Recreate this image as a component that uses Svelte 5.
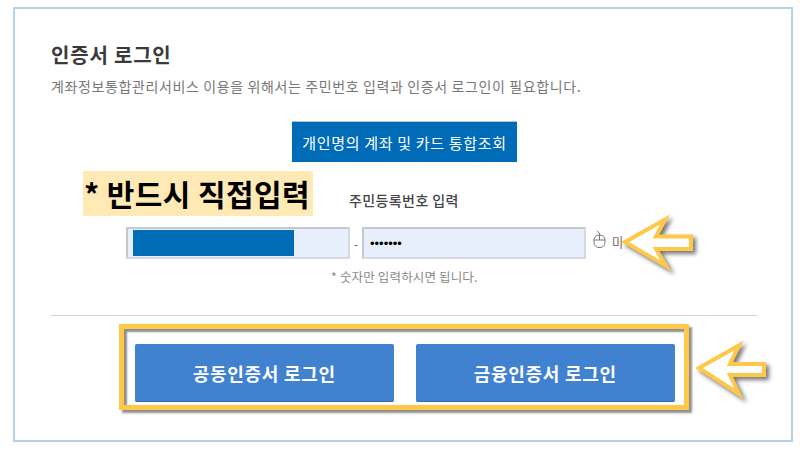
<script>
    let frontNumber = '';
    let backNumber = '1234567';
</script>

<div class="page">
    <section class="cert-panel">
        <h2>인증서 로그인</h2>
        <p class="desc">계좌정보통합관리서비스 이용을 위해서는 주민번호 입력과 인증서 로그인이 필요합니다.</p>

        <div class="lookup-row">
            <button class="lookup-btn">개인명의 계좌 및 카드 통합조회</button>
        </div>

        <div class="label-row">
            <span class="notice">* 반드시 직접입력</span>
            <span class="field-label">주민등록번호 입력</span>
        </div>

        <div class="input-row">
            <div class="input-wrap">
                <input type="text" bind:value={frontNumber} class="rrn-input" />
                <span class="mask"></span>
            </div>
            <span class="dash">-</span>
            <input type="password" bind:value={backNumber} class="rrn-input" />
            <span class="mouse-input">
                <svg width="13" height="17" viewBox="0 0 13 17" fill="none" stroke="#777" stroke-width="1">
                    <rect x="1" y="4" width="11" height="12.5" rx="5" />
                    <path d="M1 9h11M6.500 9V3C6.500 1.500 5.500 1 4 .5" />
                </svg>
                <span>마</span>
            </span>
        </div>

        <p class="hint">* 숫자만 입력하시면 됩니다.</p>

        <hr />

        <div class="login-frame">
            <button class="login-btn">공동인증서 로그인</button>
            <button class="login-btn">금융인증서 로그인</button>
        </div>
    </section>

    <svg class="arrow arrow-input" width="90" height="66" viewBox="0 0 90 66">
        <path d="M6 27L46 4.500 37 21.500H72V34H37L47 51Z" class="arrow-shape" />
    </svg>
    <svg class="arrow arrow-login" width="90" height="66" viewBox="0 0 90 66">
        <path d="M7 27L47 4.500 38 23H72V34H38L47 53Z" class="arrow-shape" />
    </svg>
</div>

<style>
    :global(body) {
        margin: 0;
        background: #fff;
    }

    .page {
        position: relative;
        width: 800px;
        height: 450px;
        padding: 7px 7px 8px 13px;
        box-sizing: border-box;
        overflow: hidden;
        font-family: "Noto Sans CJK KR", "Noto Sans", sans-serif;
    }

    .cert-panel {
        height: 100%;
        box-sizing: border-box;
        border: 2px solid #b4d2ea;
        padding: 33px 34px 0 36px;
    }

    h2 {
        margin: 0;
        font-size: 20px;
        line-height: 26px;
        letter-spacing: 0.8px;
        font-weight: 700;
        color: #3a3a3a;
    }

    .desc {
        margin: 8px 0 0;
        font-size: 14px;
        line-height: 20px;
        letter-spacing: 0.62px;
        color: #777;
        white-space: nowrap;
    }

    .lookup-row {
        display: flex;
        margin: 25px 0 0 241px;
    }

    .lookup-btn {
        width: 225px;
        height: 41px;
        padding: 0;
        border: 0;
        border-top: 1px solid #b7c4d0;
        background: #006cb7;
        color: #fff;
        font-family: inherit;
        font-size: 15px;
        letter-spacing: 0.7px;
    }

    .label-row {
        display: flex;
        align-items: flex-end;
        margin: 9px 0 0 32px;
        height: 45px;
    }

    .notice {
        width: 230px;
        height: 45px;
        line-height: 45px;
        padding-left: 1px;
        box-sizing: border-box;
        background: #ffe9b5;
        color: #000;
        font-size: 30px;
        letter-spacing: 0.4px;
        font-weight: 700;
        white-space: nowrap;
    }

    .field-label {
        margin: 0 0 6px 36px;
        font-size: 14px;
        line-height: 20px;
        letter-spacing: 0.4px;
        font-weight: 500;
        color: #444;
        white-space: nowrap;
    }

    .input-row {
        display: flex;
        align-items: center;
        margin: 11px 0 0 75px;
        height: 32px;
    }

    .input-wrap {
        position: relative;
        display: flex;
    }

    .rrn-input {
        width: 224px;
        height: 32px;
        padding: 0 6px;
        box-sizing: border-box;
        border: 2px solid #d4d9e2;
        border-top-color: #c4c8cf;
        border-left-color: #c4c8cf;
        background: #e7effc;
        font-size: 13px;
        outline: none;
    }

    .mask {
        position: absolute;
        left: 7px;
        top: 3px;
        width: 161px;
        height: 26px;
        background: #006cb7;
    }

    .dash {
        width: 12px;
        text-align: center;
        font-size: 12px;
        color: #555;
    }

    .mouse-input {
        display: flex;
        align-items: center;
        gap: 6px;
        margin: -7px 0 0 7px;
        font-size: 13px;
        color: #8a6f6a;
    }

    .mouse-input span {
        margin-top: 4px;
    }

    .hint {
        margin: 9px 0 0 280px;
        font-size: 12.500px;
        line-height: 18px;
        letter-spacing: 0.15px;
        color: #888;
        white-space: nowrap;
    }

    hr {
        margin: 29px 0 0;
        border: 0;
        border-top: 1px solid #d6d6d6;
    }

    .login-frame {
        display: flex;
        gap: 22.500px;
        width: 570px;
        height: 86px;
        margin: 8px 0 0 68px;
        padding: 15px 0 0 11px;
        box-sizing: border-box;
        border: 5px solid #ffc848;
        box-shadow: 3px 3px 2px #8f8f8f, inset 3px 3px 2px #8f8f8f;
    }

    .login-btn {
        width: 258.500px;
        height: 58px;
        padding: 0;
        border: 0;
        border-bottom: 1px solid #2d6db5;
        border-radius: 2px;
        background: #4081d0;
        color: #fff;
        font-family: inherit;
        font-size: 18px;
        letter-spacing: 0.7px;
        font-weight: 700;
    }

    .arrow {
        position: absolute;
        overflow: visible;
    }

    .arrow-input {
        left: 619px;
        top: 215px;
    }

    .arrow-login {
        left: 692px;
        top: 341px;
    }

    .arrow-shape {
        fill: #fff;
        stroke: #ffc848;
        stroke-width: 4;
        stroke-linejoin: miter;
        filter: drop-shadow(3px 3px 2px #777);
    }
</style>
